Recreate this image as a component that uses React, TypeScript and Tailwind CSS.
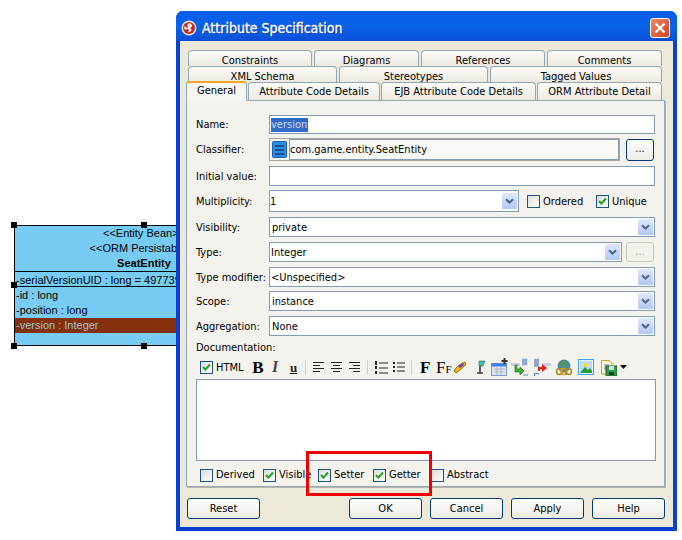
import React from "react";

const font = "font-['DejaVu_Sans_Condensed','DejaVu_Sans',sans-serif]";

function Tab({ w, label, h = "h-[16px]", pt = "pt-[3px]" }: { w: string; label: string; h?: string; pt?: string }) {
  return (
    <div className={`${w} ${h} ${pt} shrink-0 flex items-start justify-center overflow-hidden rounded-t-[4px] border border-b-0 border-[#91a7b4] bg-gradient-to-b from-[#fcfcfa] to-[#ece9e0] text-[11px] leading-[13px] text-black whitespace-nowrap`}>
      {label}
    </div>
  );
}

function Field({ w, children, h = "h-[20px]" }: { w: string; children?: React.ReactNode; h?: string }) {
  return (
    <div className={`${w} ${h} shrink-0 border border-[#7f9db9] bg-white flex items-center text-[11px] text-black whitespace-nowrap relative`}>
      {children}
    </div>
  );
}

function Chevron() {
  return (
    <div className="w-[15px] h-[16px] mr-[1px] ml-auto rounded-[1px] bg-gradient-to-b from-[#dfe8fd] to-[#b3c8f5] flex items-center justify-center">
      <svg width="9" height="7" viewBox="0 0 9 7">
        <path d="M1 1.2 L4.5 4.7 L8 1.2" fill="none" stroke="#4d6185" strokeWidth="2" />
      </svg>
    </div>
  );
}

function Combo({ w, text, pad = "pl-[1px]" }: { w: string; text: string; pad?: string }) {
  return (
    <Field w={w}>
      <span className={`${pad} pt-[2px]`}>{text}</span>
      <Chevron />
    </Field>
  );
}

function Check({ on }: { on?: boolean }) {
  return (
    <span className="w-[13px] h-[13px] shrink-0 border border-[#1c5180] bg-gradient-to-br from-[#dcdcd7] to-white flex items-center justify-center">
      {on && (
        <svg width="9" height="9" viewBox="0 0 9 9">
          <path d="M1 4 L3.4 6.6 L8 1.5" fill="none" stroke="#21a121" strokeWidth="2" />
        </svg>
      )}
    </span>
  );
}

function CheckLabel({ on, label, w, tp = "" }: { on?: boolean; label: string; w: string; tp?: string }) {
  return (
    <div className={`${w} shrink-0 flex items-center gap-[3px] text-[11px] text-black whitespace-nowrap`}>
      <Check on={on} />
      <span className={tp}>{label}</span>
    </div>
  );
}

function Row({ label, top, children }: { label: string; top: string; children: React.ReactNode }) {
  return (
    <div className={`flex items-center ${top}`}>
      <div className="w-[73px] shrink-0 pt-[2px] text-[11px] text-black whitespace-nowrap">{label}</div>
      {children}
    </div>
  );
}

function Btn({ label, w = "w-[73px]" }: { label: string; w?: string }) {
  return (
    <div className={`${w} h-[21px] shrink-0 pt-[2px] rounded-[3px] border border-[#003c74] bg-gradient-to-b from-white to-[#ecebe5] flex items-center justify-center text-[11px] text-black`}>
      {label}
    </div>
  );
}

function Sep() {
  return <div className="w-[1px] h-[15px] bg-[#d4cfb8] shrink-0" />;
}

function AlignIcon({ mode }: { mode: "l" | "c" | "r" }) {
  const xs = mode === "l" ? [0, 0, 0, 0] : mode === "c" ? [0, 2, 0, 2] : [0, 4, 0, 4];
  const ws = [11, 7, 11, 7];
  return (
    <svg width="11" height="10" viewBox="0 0 11 10" className="shrink-0">
      {[0, 3, 6, 9].map((y, i) => (
        <rect key={y} x={xs[i]} y={y} width={ws[i]} height="1" fill="#222" />
      ))}
    </svg>
  );
}

function ToolIcons() {
  return (
    <>
      <svg width="14" height="14" viewBox="0 0 14 14" className="shrink-0">
        <path d="M1 11 C3 7 8 3 12 2 L13 4 C10 8 6 11 3 13 Z" fill="#e8b80c" stroke="#6b5a10" strokeWidth="0.8" />
        <path d="M5 6 L10 3 L11 5 L7 8Z" fill="#7a3fa8" />
      </svg>
      <svg width="12" height="15" viewBox="0 0 12 15" className="shrink-0 ml-[7px]">
        <path d="M5 1 L11 1 L9 6 L5 6Z" fill="#3fc0a0" stroke="#207060" strokeWidth="0.6" />
        <path d="M6 6 V13 M3 13 H9" stroke="#333" strokeWidth="1.5" fill="none" />
      </svg>
      <svg width="17" height="18" viewBox="0 0 17 18" className="shrink-0 ml-[5px]">
        <rect x="0.5" y="5.5" width="15" height="12" fill="#dfe7f7" stroke="#7a9ad0" />
        <rect x="0.5" y="5.5" width="15" height="3" fill="#3f7fe0" />
        <path d="M3 11H14M3 14H14M6 9V17M10 9V17" stroke="#9ab" strokeWidth="0.8" />
        <path d="M13.5 0V6M10.5 3H16.5" stroke="#333" strokeWidth="2" />
      </svg>
      <svg width="18" height="18" viewBox="0 0 18 18" className="shrink-0 ml-[3px]">
        <path d="M0 5H9V8H0Z" fill="#c4d0e0" />
        <path d="M11 0H17V8H11Z" fill="#d6e0f0" />
        <path d="M11 2H16M11 4H16M11 6H16" stroke="#4a6fa5" strokeWidth="1" />
        <path d="M4 7 L6 7 L6 11 L9 11 L9 9 L13 13 L9 17 L9 14 L4 14Z" fill="#3fae2a" stroke="#1f7a1a" strokeWidth="0.7" />
        <path d="M12 17H17" stroke="#5a7fc0" strokeWidth="1" />
      </svg>
      <svg width="18" height="18" viewBox="0 0 18 18" className="shrink-0 ml-[4px]">
        <path d="M1 0H6V9H1Z" fill="#d6e0f0" />
        <path d="M1 2H6M1 4H6M1 6H6M1 8H6" stroke="#4a6fa5" strokeWidth="1" />
        <path d="M9 5H18V8H9Z" fill="#c4d0e0" />
        <path d="M5 13 L5 9 L9 9 L9 6 L14 10 L9 14 L9 11 L7 11 L7 13Z" fill="#e02010" />
        <path d="M1.5 18V15.5H6" stroke="#3f7fe0" strokeWidth="1" fill="none" />
      </svg>
      <svg width="18" height="17" viewBox="0 0 18 17" className="shrink-0 ml-[4px]">
        <circle cx="9" cy="7" r="6.5" fill="#4c8aa0" />
        <path d="M5 3 L10 2 L12 6 L7 8Z" fill="#5a9a50" />
        <circle cx="4.5" cy="12.5" r="3" fill="none" stroke="#a88a20" strokeWidth="1.6" />
        <circle cx="9" cy="12.5" r="3" fill="none" stroke="#c8a428" strokeWidth="1.6" />
        <circle cx="13.5" cy="12.5" r="3" fill="none" stroke="#a88a20" strokeWidth="1.6" />
      </svg>
      <svg width="16" height="16" viewBox="0 0 16 16" className="shrink-0 ml-[5px]">
        <rect x="0.5" y="0.5" width="15" height="15" fill="#e8f4ff" stroke="#3f9fe8" />
        <rect x="2" y="2" width="12" height="12" fill="#bcdcf8" />
        <circle cx="8" cy="6" r="2.2" fill="#f6e020" />
        <path d="M2 14 L7 8 L10 11 L12 9 L14 12 V14Z" fill="#20a030" />
      </svg>
      <svg width="16" height="17" viewBox="0 0 16 17" className="shrink-0 ml-[7px]">
        <path d="M0.5 1.5H8L11 4V15H0.5Z" fill="#fff8d8" stroke="#d0a020" />
        <path d="M3 6H8M3 8H8M3 10H6" stroke="#7080a0" strokeWidth="1" />
        <rect x="5" y="7" width="11" height="10" fill="#2f9a50" stroke="#16602c" />
        <rect x="8" y="7" width="5" height="4" fill="#cfe8d8" />
        <rect x="8" y="13" width="5" height="3" fill="#10401e" />
      </svg>
      <svg width="7" height="4" viewBox="0 0 7 4" className="shrink-0 ml-[3px]">
        <path d="M0 0H7L3.5 4Z" fill="#000" />
      </svg>
    </>
  );
}

function Handle({ cls }: { cls: string }) {
  return <div className={`absolute w-[6px] h-[6px] bg-black ${cls}`} />;
}

function EntityBox() {
  return (
    <div className="absolute left-[14px] top-[225px] w-[260px] h-[121px] border border-black bg-[#77ccf5] text-[11px] leading-[15px] text-black font-['Liberation_Sans',sans-serif] whitespace-nowrap">
      <div className="h-[45px] flex flex-col items-center">
        <div className="leading-[15px]">&lt;&lt;Entity Bean&gt;&gt;</div>
        <div className="leading-[15px]">&lt;&lt;ORM Persistable&gt;&gt;</div>
        <div className="font-bold leading-[15px]">SeatEntity</div>
      </div>
      <div className="border-t border-black h-[16px] border-b overflow-hidden pl-[1px] leading-[16px]">-serialVersionUID : long = 4977395</div>
      <div className="pl-[1px] pt-[1px]">-id : long</div>
      <div className="pl-[1px]">-position : long</div>
      <div className="pl-[1px] bg-[#84300c] text-[#9fc4d8]">-version : Integer</div>
      <Handle cls="-left-[4px] -top-[4px]" />
      <Handle cls="left-[126px] -top-[4px]" />
      <Handle cls="-left-[4px] top-[56px]" />
      <Handle cls="-left-[4px] -bottom-[4px]" />
      <Handle cls="left-[126px] -bottom-[4px]" />
    </div>
  );
}

function Dialog() {
  return (
    <div className={`absolute left-[176px] top-[11px] w-[501px] h-[520px] rounded-t-[7px] bg-[#0a3fd0] flex flex-col p-[4px] pt-0 ${font}`}>
      <div className="h-[30px] -mx-[4px] pt-[3px] shrink-0 rounded-t-[7px] bg-gradient-to-b from-[#0a5ce8] via-[#0a62e8] to-[#0a4fd8] flex items-center pl-[5px] pr-[7px]">
        <svg width="16" height="16" viewBox="0 0 16 16" className="shrink-0">
          <circle cx="8" cy="8" r="7.5" fill="#e8e4dc" />
          <circle cx="8" cy="8" r="6" fill="#c02a2a" />
          <path d="M8 3 C12 4 12 7 9 8 C12 9 10 13 7 12 C9 10 7 9 6 9 C4 11 2 8 4 6 C5 8 7 8 7 7 C6 5 6 4 8 3Z" fill="#f4e8e0" />
        </svg>
        <div className="ml-[5px] text-white text-[14px] leading-none [text-shadow:1px_1px_0_#0a2a90] [-webkit-text-stroke:0.35px_white] whitespace-nowrap">
          Attribute Specification
        </div>
        <div className="ml-auto w-[20px] h-[20px] rounded-[3px] border border-white bg-gradient-to-br from-[#ec8a68] to-[#d0401c] flex items-center justify-center">
          <svg width="12" height="12" viewBox="0 0 12 12">
            <path d="M1.5 1.5 L10.5 10.5 M10.5 1.5 L1.5 10.5" stroke="#fff" strokeWidth="2.2" />
          </svg>
        </div>
      </div>
      <div className="flex-1 bg-[#ece9d8] flex flex-col pl-[6px] pr-[8px] pb-[7px]">
        {/* tabs */}
        <div className="pt-[9px] flex flex-col shrink-0">
          <div className="flex gap-[2px] pl-[2px]">
            <Tab w="w-[124px]" label="Constraints" />
            <Tab w="w-[105px]" label="Diagrams" />
            <Tab w="w-[124px]" label="References" />
            <Tab w="w-[115px]" label="Comments" />
          </div>
          <div className="flex gap-[2px] pl-[2px]">
            <Tab w="w-[149px]" label="XML Schema" />
            <Tab w="w-[149px]" label="Stereotypes" />
            <Tab w="w-[172px]" label="Tagged Values" />
          </div>
          <div className="flex gap-[1px] relative">
            <div className="w-[61px] h-[20px] -mt-[1px] mb-[-1px] shrink-0 z-10 rounded-t-[3px] border-t-[2px] border-x border-t-[#f5a623] border-x-[#91a7b4] bg-[#f7f7f2] flex items-start justify-center text-[11px] leading-[15px] text-black">
              General
            </div>
            <Tab h="h-[18px]" pt="pt-[2px]" w="w-[132px]" label="Attribute Code Details" />
            <Tab h="h-[18px]" pt="pt-[2px]" w="w-[155px]" label="EJB Attribute Code Details" />
            <Tab h="h-[18px]" pt="pt-[2px]" w="w-[125px]" label="ORM Attribute Detail" />
          </div>
        </div>
        {/* panel */}
        <div className="h-[387px] w-[479px] shrink-0 border border-[#91a7b4] bg-[#f3f2ec] pl-[9px] flex flex-col shadow-[1px_1px_0_#b8b6a8]">
          <Row label="Name:" top="mt-[14px]">
            <Field w="w-[386px]" h="h-[19px]">
              <span className="ml-[1px] bg-[#316ac5] text-[#cfdcf5] leading-[14px] pr-[1px]">version</span>
            </Field>
          </Row>
          <Row label="Classifier:" top="mt-[4px]">
            <div className="w-[351px] h-[23px] shrink-0 border border-[#a9a697] flex items-center bg-[#f3f2ec]">
              <svg width="15" height="17" viewBox="0 0 15 17" className="ml-[2px] shrink-0">
                <rect x="0.5" y="0.5" width="14" height="16" rx="1" fill="#2a8ce8" stroke="#1560b0" />
                <path d="M3 5H12M3 9H12M3 13H12" stroke="#1c3a5c" strokeWidth="1.6" />
              </svg>
              <div className="ml-[2px] flex-1 h-[21px] border border-[#7f9db9] flex items-center pt-[2px] text-[11px] text-black whitespace-nowrap bg-[#f9f9f6]">
                com.game.entity.SeatEntity
              </div>
            </div>
            <div className="ml-[6px] w-[28px] h-[22px] shrink-0 rounded-[3px] border border-[#003c74] bg-gradient-to-b from-white to-[#ecebe5] flex items-center justify-center text-[11px] text-black">
              ...
            </div>
          </Row>
          <Row label="Initial value:" top="mt-[5px]">
            <Field w="w-[386px]" />
          </Row>
          <Row label="Multiplicity:" top="mt-[4px]">
            <Field w="w-[250px]" h="h-[22px]">
              <span className="pt-[2px]">1</span>
              <Chevron />
            </Field>
            <div className="ml-[8px]"><CheckLabel label="Ordered" w="w-[69px]" tp="pt-[2px]" /></div>
            <CheckLabel on label="Unique" w="w-[60px]" tp="pt-[2px]" />
          </Row>
          <Row label="Visibility:" top="mt-[5px]">
            <Combo w="w-[386px]" text="private" pad="pl-[2px]" />
          </Row>
          <Row label="Type:" top="mt-[5px]">
            <Combo w="w-[353px]" text="Integer" />
            <div className="ml-[4px] w-[28px] h-[20px] shrink-0 rounded-[3px] border border-[#c9c7ba] bg-[#f3f2ec] flex items-center justify-center text-[11px] text-[#a8a698]">
              ...
            </div>
          </Row>
          <Row label="Type modifier:" top="mt-[5px]">
            <Combo w="w-[386px]" text="<Unspecified>" />
          </Row>
          <Row label="Scope:" top="mt-[4px]">
            <Combo w="w-[386px]" text="instance" pad="pl-[2px]" />
          </Row>
          <Row label="Aggregation:" top="mt-[5px]">
            <Combo w="w-[386px]" text="None" pad="pl-[2px]" />
          </Row>
          <div className="mt-[4px] h-[15px] text-[11px] leading-[15px] text-black">Documentation:</div>
          <div className="h-[24px] flex items-center pl-[4px] text-black">
            <CheckLabel on label="HTML" w="w-[44px]" tp="pt-[2px]" />
            <span className="ml-[8px] w-[12px] text-center font-['Liberation_Serif',serif] font-bold text-[17px] leading-none">B</span>
            <span className="ml-[7px] w-[8px] text-center font-['Liberation_Serif',serif] italic font-bold text-[#444] text-[16px] leading-none">I</span>
            <span className="ml-[9px] w-[11px] text-center font-['Liberation_Serif',serif] font-bold text-[#222] text-[13px] leading-none underline">u</span>
            <div className="ml-[6px]"><Sep /></div>
            <div className="ml-[7px]"><AlignIcon mode="l" /></div>
            <div className="ml-[7px]"><AlignIcon mode="c" /></div>
            <div className="ml-[7px]"><AlignIcon mode="r" /></div>
            <div className="ml-[7px]"><Sep /></div>
            <svg width="13" height="13" viewBox="0 0 13 13" className="ml-[7px] shrink-0">
              <path d="M4 2H13M4 7H13M4 12H13" stroke="#222" />
              <rect x="0" y="0" width="2" height="4" fill="#222" />
              <rect x="0" y="5" width="2" height="3" fill="#222" />
              <rect x="0" y="10" width="2" height="3" fill="#222" />
            </svg>
            <svg width="12" height="12" viewBox="0 0 12 12" className="ml-[5px] shrink-0">
              <path d="M4 2H12M4 6H12M4 10H12" stroke="#222" />
              <rect x="0" y="1" width="2" height="2" fill="#222" />
              <rect x="0" y="5" width="2" height="2" fill="#222" />
              <rect x="0" y="9" width="2" height="2" fill="#222" />
            </svg>
            <div className="ml-[6px]"><Sep /></div>
            <span className="ml-[8px] w-[10px] font-['Liberation_Serif',serif] text-[17px] font-bold leading-none">F</span>
            <span className="ml-[6px] w-[14px] font-['Liberation_Serif',serif] text-[17px] leading-none">F<span className="text-[11px]">F</span></span>
            <div className="ml-[3px] flex items-center"><ToolIcons /></div>
          </div>
          <div className="w-[460px] h-[82px] shrink-0 border border-[#7f9db9] bg-white" />
          <div className="mt-[6px] flex items-center">
            <div className="ml-[4px]"><CheckLabel label="Derived" w="w-[63px]" /></div>
            <CheckLabel on label="Visible" w="w-[55px]" />
            <CheckLabel on label="Setter" w="w-[55px]" />
            <CheckLabel on label="Getter" w="w-[58px]" />
            <CheckLabel label="Abstract" w="w-[60px]" />
          </div>
        </div>
        {/* buttons */}
        <div className="mt-[11px] flex gap-[8px] pl-[1px]">
          <Btn label="Reset" />
          <div className="w-[73px] shrink-0" />
          <Btn label="OK" />
          <Btn label="Cancel" />
          <Btn label="Apply" />
          <Btn label="Help" />
        </div>
      </div>
    </div>
  );
}

export default function App() {
  return (
    <div className="relative w-[682px] h-[540px] bg-white overflow-hidden">
      <EntityBox />
      <Dialog />
      <div className="absolute left-[306px] top-[451px] w-[126px] h-[45px] border-[3px] border-[#f00000]" />
    </div>
  );
}
